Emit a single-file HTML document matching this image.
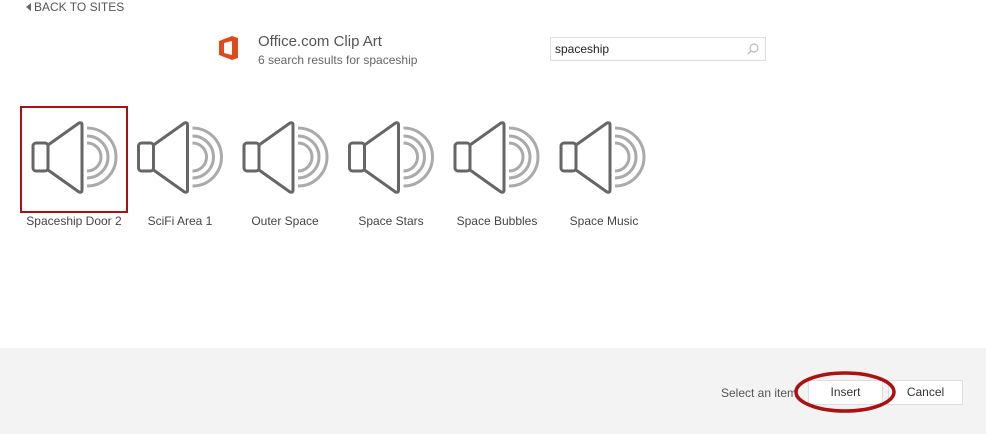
<!DOCTYPE html>
<html><head><meta charset="utf-8"><style>
*{margin:0;padding:0;box-sizing:border-box}
body{width:986px;height:434px;background:#fff;font-family:"Liberation Sans",sans-serif;position:relative;overflow:hidden;color:#444}
.abs{position:absolute}
.lbl{position:absolute;top:214px;font-size:12px;color:#444;width:110px;text-align:center}
</style></head><body>
<svg class="abs" style="left:26px;top:3px" width="6" height="8"><path d="M5 0 L0 4 L5 8 Z" fill="#666"/></svg>
<div class="abs" style="left:34px;top:0px;font-size:12px;color:#555">BACK TO SITES</div>
<svg class="abs" style="left:218px;top:35px" width="22" height="26" viewBox="0 0 22 26"><path d="M1 6 L14 1 L20 3 L20 23 L14 25 L1 20 Z M6 8 L6 18 L14 20 L14 6 Z" fill="#e04a1a" fill-rule="evenodd"/></svg>
<div class="abs" style="left:258px;top:33px;font-size:15px;color:#555">Office.com Clip Art</div>
<div class="abs" style="left:258px;top:53px;font-size:12px;color:#666">6 search results for spaceship</div>
<div class="abs" style="left:550px;top:37px;width:216px;height:24px;border:1px solid #ddd;background:#fff"></div>
<div class="abs" style="left:555px;top:42px;font-size:12px;color:#222">spaceship</div>
<svg class="abs" style="left:746px;top:42px" width="14" height="14"><circle cx="8" cy="6" r="4" fill="none" stroke="#bbb" stroke-width="1.2"/><line x1="5" y1="9" x2="2" y2="12" stroke="#bbb" stroke-width="1.5"/></svg>
<div class="abs" style="left:20px;top:106px;width:108px;height:107px;border:2px solid #a11"></div>
<svg class="abs" style="left:0;top:0" width="986" height="240">
<defs><g id="spk" fill="none" stroke-width="3" stroke-linejoin="round"><rect x="33" y="143" width="15" height="28" rx="3" stroke="#666"/><path d="M48 145 L79 123 Q82 122 82 125 L82 190 Q82 193 79 192 L48 170" stroke="#666"/><path d="M87 143 A14 14 0 0 1 87 171 M87 136 A21 21 0 0 1 87 178 M87 128 A29 29 0 0 1 87 186" stroke="#aaa"/></g></defs>
<use href="#spk" x="0"/><use href="#spk" x="105.5"/><use href="#spk" x="211"/><use href="#spk" x="316.5"/><use href="#spk" x="422"/><use href="#spk" x="528"/>
</svg>
<div class="lbl" style="left:19px">Spaceship Door 2</div>
<div class="lbl" style="left:125px">SciFi Area 1</div>
<div class="lbl" style="left:230px">Outer Space</div>
<div class="lbl" style="left:336px">Space Stars</div>
<div class="lbl" style="left:442px">Space Bubbles</div>
<div class="lbl" style="left:549px">Space Music</div>
<div class="abs" style="left:0;top:348px;width:986px;height:86px;background:#f3f3f3"></div>
<div class="abs" style="left:721px;top:386px;font-size:12px;color:#555">Select an item</div>
<div class="abs" style="left:808px;top:380px;width:75px;height:25px;border:1px solid #ddd;background:#fff;font-size:12px;color:#333;text-align:center;line-height:23px">Insert</div>
<div class="abs" style="left:888px;top:380px;width:75px;height:25px;border:1px solid #ddd;background:#fff;font-size:12px;color:#333;text-align:center;line-height:23px">Cancel</div>
<svg class="abs" style="left:0;top:0" width="986" height="434"><ellipse cx="845" cy="392" rx="49" ry="19" fill="none" stroke="#a11" stroke-width="3.5"/></svg>
</body></html>
